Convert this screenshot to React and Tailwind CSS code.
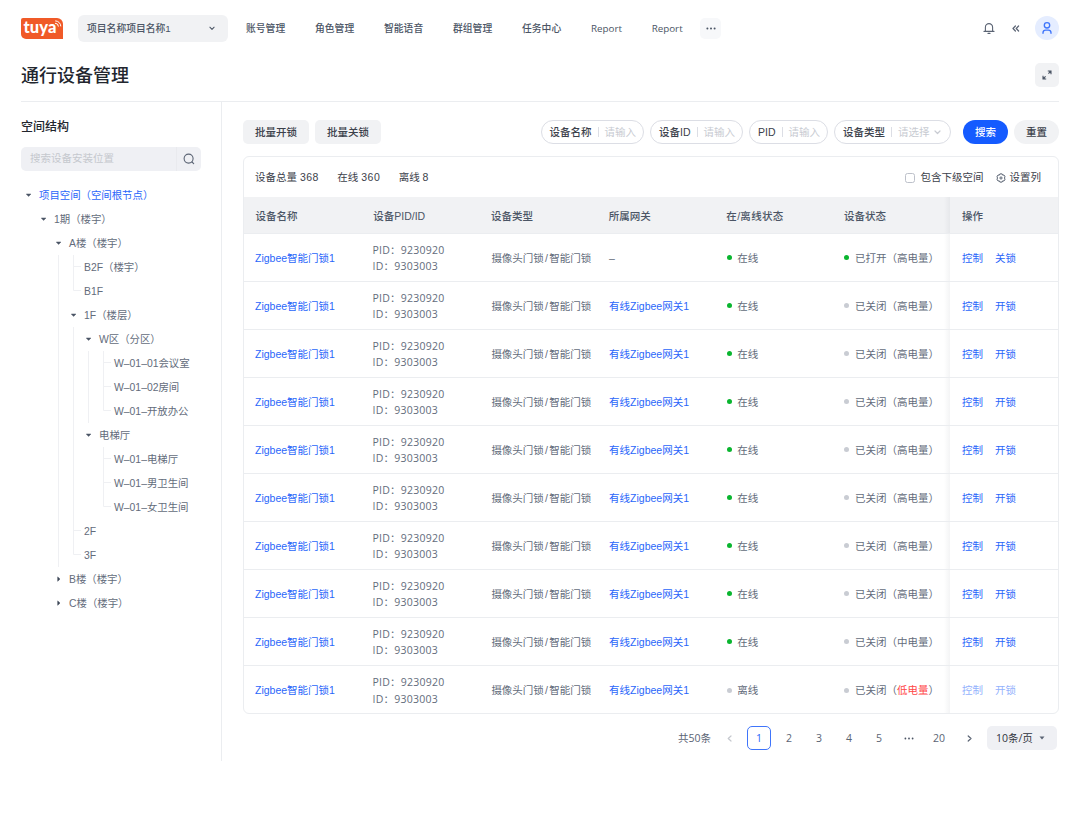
import React from "react";

const SANS = "font-['Liberation_Sans','Noto_Sans_CJK_SC',sans-serif]";
const ROUND = "font-['Open_Sans','Noto_Sans_CJK_SC',sans-serif]";

/* v: vertical guide, t: tee, l: elbow, d: open arrow, r: closed arrow, space: blank */
const TREE = [
  ["d", "项目空间（空间根节点）"],
  [" d", "1期（楼宇）"],
  ["  d", "A楼（楼宇）"],
  ["  vt", "B2F（楼宇）"],
  ["  vl", "B1F"],
  ["  vd", "1F（楼层）"],
  ["  vvd", "W区（分区）"],
  ["  vvvt", "W–01–01会议室"],
  ["  vvvt", "W–01–02房间"],
  ["  vvvl", "W–01–开放办公"],
  ["  vvd", "电梯厅"],
  ["  vv t", "W–01–电梯厅"],
  ["  vv t", "W–01–男卫生间"],
  ["  vv l", "W–01–女卫生间"],
  ["  vt", "2F"],
  ["  vl", "3F"],
  ["  r", "B楼（楼宇）"],
  ["  r", "C楼（楼宇）"],
];

const GUIDES = {
  v: "M7.5 0V24",
  t: "M7.5 0V24M7.5 11.5H15",
  l: "M7.5 0V11.5H15",
};

function TreeCell({ kind }) {
  return (
    <svg width="15" height="24" viewBox="0 0 15 24" className="shrink-0" fill="none">
      {GUIDES[kind] && <path d={GUIDES[kind]} stroke="#eff0f3" />}
      {kind === "d" && <path d="M5.3 11h4.6L7.6 13.4z" fill="#4b5565" stroke="#4b5565" strokeWidth=".5" strokeLinejoin="round" />}
      {kind === "r" && <path d="M6.7 9.9v4.4L9 12.1z" fill="#3f4858" stroke="#3f4858" strokeWidth=".5" strokeLinejoin="round" />}
    </svg>
  );
}

function Chevron({ className = "", d = "M1 1l2.5 2.5L6 1", w = 7, h = 5 }) {
  return (
    <svg width={w} height={h} viewBox={`0 0 ${w} ${h}`} className={className} fill="none" stroke="currentColor" strokeWidth="1.2" strokeLinecap="round" strokeLinejoin="round">
      <path d={d} />
    </svg>
  );
}

function Logo() {
  return (
    <div className="relative flex h-[21px] w-[42px] shrink-0 items-center justify-center rounded-tl-[2px] rounded-tr-[6px] rounded-bl-[5px] bg-[#f05a28]">
      <span className="-mt-px -ml-[4px] font-['Lato',sans-serif] text-[16.5px] leading-none font-black tracking-[0.1px] text-white">tuya</span>
      <svg width="8" height="8" viewBox="0 0 8 8" className="absolute top-[2px] right-[1px]" fill="none" stroke="#fff" strokeWidth="1" strokeLinecap="round">
        <path d="M1.6 .9A5.2 5.2 0 0 1 6.8 6M1.4 3.2A3 3 0 0 1 4.4 6.2" />
      </svg>
    </div>
  );
}

function Header() {
  return (
    <header className={`flex h-[56px] items-center text-[9.8px] font-medium text-[#4b5565] ${ROUND}`}>
      <Logo />
      <div className="ml-[15px] flex h-[27px] w-[150px] items-center justify-between rounded-[6px] bg-[#f1f2f4] pr-[13px] pl-[9px]">
        <span className={`pt-[2px] ${SANS}`}>项目名称项目名称1</span>
        <Chevron className="w-[6px]" />
      </div>
      <nav className="ml-[18px] flex items-center pt-[2px]">
        {["账号管理", "角色管理", "智能语音", "群组管理", "任务中心"].map((t) => (
          <span key={t} className="w-[69px] whitespace-nowrap">{t}</span>
        ))}
        <span className="w-[60.7px]">Report</span>
        <span className="w-[48.8px]">Report</span>
      </nav>
      <div className="flex size-[21px] items-center justify-center rounded-[5px] bg-[#f7f8fa]">
        <svg width="10" height="3" viewBox="0 0 10 3" fill="#4b5565"><circle cx="1.4" cy="1.5" r="1" /><circle cx="5" cy="1.5" r="1" /><circle cx="8.6" cy="1.5" r="1" /></svg>
      </div>
      <div className="ml-auto flex items-center">
        <svg width="12" height="12" viewBox="0 0 12 12" fill="none" stroke="#5b6474" strokeWidth="1.1" strokeLinecap="round" strokeLinejoin="round">
          <path d="M2.4 9.3V5.2a3.6 3.6 0 0 1 7.2 0v4.1M1 9.4h10M5 11.4h2" />
        </svg>
        <Chevron className="ml-[17px] text-[#5b6474]" d="M3.4 1L1 3.5L3.4 6M6.6 1L4.2 3.5L6.6 6" w={8} h={7} />
        <div className="ml-[15px] flex size-6 items-center justify-center rounded-full bg-[#e5edff]">
          <svg width="12" height="14" viewBox="0 0 12 14" fill="none" stroke="#3f75fb" strokeWidth="1.35" strokeLinecap="round">
            <circle cx="6" cy="4.3" r="2.7" /><path d="M2 12.2v-.5a2.7 2.7 0 0 1 2.7-2.6h2.6a2.7 2.7 0 0 1 2.7 2.6v.5" />
          </svg>
        </div>
      </div>
    </header>
  );
}

function Sidebar() {
  return (
    <aside className="w-[201px] shrink-0 border-r border-[#ebedf0] pt-[15px] text-[10.4px] text-[#636c7b]">
      <h2 className="h-5 text-[12px] leading-[20px] font-medium text-[#22262e]">空间结构</h2>
      <div className="mt-[10px] flex h-6 w-[180px] items-center rounded-[5px] bg-[#eff0f4]">
        <span className="flex h-full w-[156px] items-center border-r border-[#e9eaee] pl-[9px] text-[10.5px] text-[#c5c8ce]">搜索设备安装位置</span>
        <svg width="12" height="12" viewBox="0 0 12 12" className="ml-[6px]" fill="none" stroke="#5b6474" strokeWidth="1.1" strokeLinecap="round">
          <circle cx="5.6" cy="5.6" r="4.5" /><path d="M9 9l1.7 1.7" />
        </svg>
      </div>
      <div className="mt-3">
        {TREE.map(([cells, label], i) => (
          <div key={label} className={`flex h-6 items-center whitespace-nowrap ${i === 0 ? "text-[#2a66fa]" : ""}`}>
            {[...cells].map((k, j) => <TreeCell key={j} kind={k} />)}
            <span className="ml-[3px] pt-[2px]">{label}</span>
          </div>
        ))}
      </div>
    </aside>
  );
}

function Field({ label, hint, className, select }) {
  return (
    <div className={`flex h-6 items-center rounded-full border border-[#dcdee5] pl-[8px] whitespace-nowrap ${className}`}>
      <span className="pt-px font-medium text-[#3c414b]">{label}</span>
      <span className="mx-[6px] h-[10px] w-px bg-[#dcdee5]" />
      <span className="pt-px text-[#c8cbd2]">{hint}</span>
      {select && <Chevron className="ml-[4px] text-[#c8cbd2]" />}
    </div>
  );
}

function Toolbar() {
  return (
    <div className="flex h-6 items-center text-[10.5px] text-[#3c414b]">
      <button className="h-6 w-[66px] rounded-[5px] bg-[#f1f2f4] pt-px font-medium">批量开锁</button>
      <button className="ml-[6px] h-6 w-[66px] rounded-[5px] bg-[#f1f2f4] pt-px font-medium">批量关锁</button>
      <div className="ml-auto flex gap-[6px]">
        <Field label="设备名称" hint="请输入" className="w-[103.5px]" />
        <Field label="设备ID" hint="请输入" className="w-[93px]" />
        <Field label="PID" hint="请输入" className="w-[79px]" />
        <Field label="设备类型" hint="请选择" className="w-[117px]" select />
      </div>
      <button className="ml-[12px] h-6 w-[45px] rounded-full bg-[#155bff] pt-px font-medium text-white">搜索</button>
      <button className="ml-[6px] h-6 w-[45px] rounded-full bg-[#f1f2f4] pt-px font-medium">重置</button>
    </div>
  );
}

const GRID = "grid grid-cols-[repeat(6,117.7px)_1fr]";
const OPS = "-ml-[6px] flex h-full items-center gap-[12px]";

function FixedEdge() {
  return <span className="-mr-[0.2px] h-full w-[6px] shrink-0 bg-linear-to-r from-[#1e283c]/0 to-[#1e283c]/5" />;
}

const ROWS = Array.from({ length: 10 }, (_, i) => ({
  gateway: i === 0 ? null : "有线Zigbee网关1",
  online: i < 9,
  open: i === 0,
  power: i === 9 ? "低电量" : i === 8 ? "中电量" : "高电量",
}));

function Dot({ on }) {
  return <span className={`mr-[5.5px] size-[5px] shrink-0 rounded-full ${on ? "bg-[#0ab52f]" : "bg-[#c9ccd3]"}`} />;
}

function Table() {
  return (
    <section className="mt-3 h-[558px] overflow-hidden rounded-[6px] border border-[#ebedf0] text-[10.5px] text-[#636c7b]">
      <div className="flex h-[40px] items-center pt-px pr-[17px] pl-[11px] text-[#3c414b]">
        <span>设备总量 <span className="tracking-[0.5px]">368</span></span>
        <span className="ml-[18.4px]">在线 <span className="tracking-[0.5px]">360</span></span>
        <span className="ml-[18.4px]">离线 8</span>
        <span className="ml-auto size-[10px] rounded-[2.5px] border border-[#bdc1ca]" />
        <span className="ml-[6px]">包含下级空间</span>
        <svg width="10" height="10" viewBox="0 0 10 10" className="ml-[12px]" fill="none" stroke="#4b5565" strokeWidth="0.9" strokeLinejoin="round">
          <path d="M3.9 .9h2.2l.5 1.2 1.4-.1 1.1 1.9L8.3 5l.8 1.1L8 8l-1.4-.1-.5 1.2H3.9l-.5-1.2L2 8 .9 6.1 1.7 5 .9 3.9 2 2l1.4.1z" /><circle cx="5" cy="5" r="1.1" />
        </svg>
        <span className="ml-[4px]">设置列</span>
      </div>
      <div className={`${GRID} h-[37px] items-center border-b border-[#ebedf0] bg-[#f1f2f4] font-medium text-[#4b5565]`}>
        {["设备名称", "设备PID/ID", "设备类型", "所属网关", "在/离线状态", "设备状态"].map((h) => (
          <span key={h} className={`pt-[3px] pl-[11.6px] ${h.startsWith("在") ? "tracking-[0.3px]" : ""}`}>{h}</span>
        ))}
        <div className={OPS}><FixedEdge /><span className="pt-[3px]">操作</span></div>
      </div>
      {ROWS.map((r, i) => (
        <div key={i} className={`${GRID} h-12 items-center whitespace-nowrap ${i < 9 ? "border-b border-[#ebedf0]" : ""}`}>
          <span className="pt-[2px] pl-[11px] text-[#2a66fa]">Zigbee智能门锁1</span>
          <span className={`pt-px pl-[10.8px] text-[10.5px] leading-[16.5px] tracking-[0.25px] ${ROUND}`}>PID：9230920<br />ID：9303003</span>
          <span className="pt-[2px] pl-[12px]">摄像头门锁<span className="mx-[1.2px]">/</span>智能门锁</span>
          <span className={`pt-[2px] pl-[12px] ${r.gateway ? "text-[#2a66fa]" : ""}`}>{r.gateway ?? "–"}</span>
          <span className="flex items-center pl-[12px]"><Dot on={r.online} /><span className="pt-[2px]">{r.online ? "在线" : "离线"}</span></span>
          <span className="flex items-center pl-[12px]">
            <Dot on={r.open} />
            <span className="pt-[2px]">
              {r.open ? "已打开" : "已关闭"}（<span className={r.power === "低电量" ? "text-[#ff4747]" : ""}>{r.power}</span>）
            </span>
          </span>
          <div className={`${OPS} ${r.online ? "text-[#2a66fa]" : "text-[#94b2fd]"}`}>
            <FixedEdge /><span className="pt-[2px]">控制</span><span className="pt-[2px]">{r.open ? "关锁" : "开锁"}</span>
          </div>
        </div>
      ))}
    </section>
  );
}

function Pager() {
  return (
    <div className={`mt-[12px] flex h-6 items-center justify-end pr-[2px] text-[10.5px] text-[#5b6474] ${ROUND}`}>
      <span className="pt-px">共50条</span>
      <span className="ml-[3px] flex w-[30px] justify-center text-[#c5c8ce]"><Chevron d="M4 1L1.2 3.5L4 6" w={5} h={7} /></span>
      <span className="mx-[3px] flex size-6 items-center justify-center rounded-[5px] border border-[#3f75fb] pt-px text-[#2a66fa]">1</span>
      {["2", "3", "4", "5", "…", "20"].map((p) => (
        <span key={p} className="flex w-[30px] justify-center pt-px">
          {p === "…" ? <svg width="10" height="3" viewBox="0 0 10 3" fill="#4b5565"><circle cx="1.4" cy="1.5" r=".9" /><circle cx="5" cy="1.5" r=".9" /><circle cx="8.6" cy="1.5" r=".9" /></svg> : p}
        </span>
      ))}
      <span className="flex w-[30px] justify-center"><Chevron d="M1.2 1L4 3.5L1.2 6" w={5} h={7} /></span>
      <div className="ml-[3px] flex h-6 w-[70px] items-center justify-between rounded-[5px] bg-[#eff0f4] pr-[12px] pl-[9px] text-[#30343d]">
        <span className="pt-px">10条/页</span>
        <svg width="6" height="4" viewBox="0 0 6 4"><path d="M.5 .5h5L3 3.6z" fill="#5b6474" /></svg>
      </div>
    </div>
  );
}

export default function App() {
  return (
    <div className={`h-[813px] w-[1080px] overflow-hidden bg-white px-[21px] ${SANS}`} lang="zh-CN">
      <Header />
      <div className="flex h-[45px] items-center justify-between pb-[7px]">
        <h1 className="pt-[2px] text-[18px] leading-none font-medium text-[#22262e]">通行设备管理</h1>
        <button className="flex size-6 items-center justify-center rounded-[5px] bg-[#f1f2f4]">
          <svg width="10" height="10" viewBox="0 0 10 10" fill="none" stroke="#4b5565" strokeWidth="1.1">
            <path d="M5.8 1H9v3.2M9 1L6.4 3.6M4.2 9H1V5.8M1 9l2.6-2.6" />
            <path d="M6.8 1H9v2.2zM3.2 9H1V6.8z" fill="#4b5565" stroke="none" />
          </svg>
        </button>
      </div>
      <div className="flex h-[660px] border-t border-[#ebedf0]">
        <Sidebar />
        <main className="ml-[21px] flex-1 pt-[18px]">
          <Toolbar />
          <Table />
          <Pager />
        </main>
      </div>
    </div>
  );
}
